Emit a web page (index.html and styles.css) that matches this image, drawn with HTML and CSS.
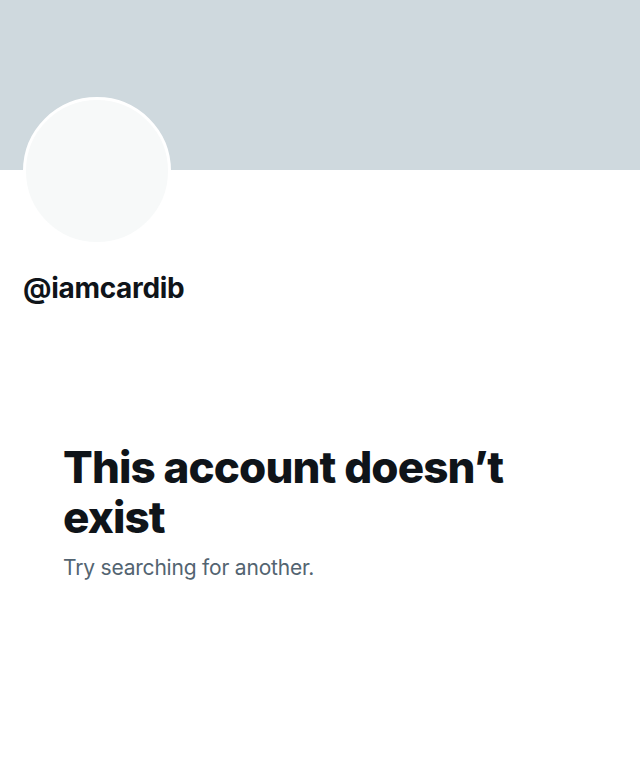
FILE: index.html
```html
<!DOCTYPE html>
<html lang="en">
<head>
<meta charset="utf-8">
<title>@iamcardib</title>
<link rel="stylesheet" href="styles.css">
</head>
<body>
<div class="page">
  <div class="banner"></div>
  <div class="profile">
    <div class="avatar"></div>
    <div class="handle">@iamcardib</div>
  </div>
  <div class="empty">
    <h1 class="title">This account doesn’t exist</h1>
    <p class="subtitle">Try searching for another.</p>
  </div>
</div>
</body>
</html>
```

FILE: styles.css
```css
html, body {
  margin: 0;
  padding: 0;
  background: #ffffff;
}
body {
  font-family: Inter, "Noto Sans", "Liberation Sans", sans-serif;
  color: #0f1419;
}
.page {
  width: 640px;
  min-height: 759px;
  background: #ffffff;
}
.banner {
  height: 170px;
  background: #cfd9de;
}
.profile {
  padding: 0 23px;
}
.avatar {
  width: 148px;
  height: 148px;
  margin-top: -73px;
  border-radius: 50%;
  background: #f7f9f9;
  border: 3px solid #ffffff;
  box-sizing: border-box;
}
.handle {
  margin-top: 26px;
  font-size: 28px;
  line-height: 34px;
  font-weight: 700;
  letter-spacing: -0.3px;
}
.empty {
  padding: 0 63px;
  margin-top: 137px;
}
.title {
  margin: 0;
  font-size: 44px;
  line-height: 50px;
  font-weight: 800;
  letter-spacing: -0.9px;
  max-width: 460px;
}
.subtitle {
  margin: 12px 0 0;
  font-size: 21px;
  line-height: 28px;
  font-weight: 400;
  letter-spacing: -0.2px;
  color: #536471;
}
```
